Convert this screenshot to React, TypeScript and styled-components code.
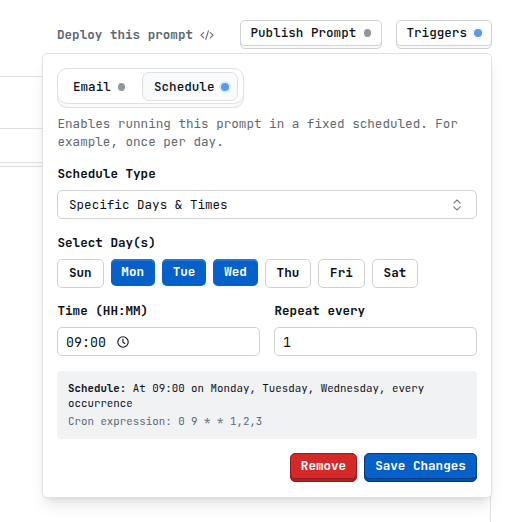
import React from "react";
import styled, { createGlobalStyle, css } from "styled-components";

const ink = "#0c1017";
const muted = "#5d6875";
const line = "#cfd1d3";
const softLine = "#dfe0e2";

const GlobalStyle = createGlobalStyle`
  * { box-sizing: border-box; }
  body { margin: 0; background: #fff; }
  button, input { font: inherit; color: inherit; margin: 0; }
`;

const Page = styled.main`
  position: relative;
  width: 511px;
  height: 522px;
  overflow: hidden;
  background: #fff;
  color: ${ink};
  font-family: "JetBrains Mono", "DejaVu Sans Mono", "Liberation Mono", monospace;
  font-size: 12.6px;
  line-height: 18px;
  white-space: nowrap;
`;

const Header = styled.header`
  display: flex;
  align-items: flex-start;
  justify-content: flex-end;
  height: 76px;
  padding: 20px 19px 0 57px;
`;

const DeployLabel = styled.div`
  display: flex;
  align-items: center;
  gap: 7px;
  height: 30px;
  margin-right: auto;
  color: ${muted};
  font-weight: 600;
  svg { flex: none; }
`;

const HeaderButton = styled.button<{ $width: number }>`
  display: flex;
  align-items: center;
  justify-content: space-between;
  width: ${(p) => p.$width}px;
  height: 29px;
  margin-left: 14px;
  padding: 0 9px 3px 9.5px;
  border: 1px solid ${line};
  border-radius: 5px;
  background: #fff;
  box-shadow: inset 0 -2px 0 #fafafa, inset 0 -3px 0 ${line};
  font-weight: 500;
`;

const Dot = styled.span<{ $on?: boolean; $halo?: string }>`
  flex: none;
  width: ${(p) => (p.$on ? 8 : 7)}px;
  height: 8px;
  margin-right: ${(p) => (p.$on ? 0 : 1)}px;
  border-radius: 50%;
  background: ${(p) => (p.$on ? "#5c9ae2" : "#8e979c")};
  ${(p) => p.$halo && css`box-shadow: 0 0 0 2px ${p.$halo};`}
`;

const Backdrop = styled.section`
  height: 446px;
  margin-right: 20px;
  border-right: 1px solid ${softLine};
`;

const BackRow = styled.div<{ $height: number; $fill?: string }>`
  height: ${(p) => p.$height}px;
  border-top: 1px solid ${softLine};
  background: ${(p) => p.$fill || "#fff"};
`;

const Popover = styled.section`
  position: absolute;
  top: 53px;
  left: 42px;
  width: 450px;
  height: 445px;
  padding: 14px;
  border: 1px solid ${softLine};
  border-radius: 5px;
  background: #fff;
  box-shadow: 0 10px 15px -3px rgba(0, 0, 0, 0.1), 0 4px 6px -4px rgba(0, 0, 0, 0.1);
`;

const Tabs = styled.div`
  display: flex;
  width: 187px;
  height: 40px;
  padding: 3px 5px 6px 4px;
  border: 1px solid ${softLine};
  border-radius: 10px;
  box-shadow: inset 0 -3px 0 #fafafa, inset 0 -4px 0 ${softLine};
`;

const Tab = styled.button<{ $active?: boolean }>`
  display: flex;
  align-items: center;
  justify-content: space-between;
  width: ${(p) => (p.$active ? 96 : 80)}px;
  height: 29px;
  padding: ${(p) => (p.$active ? "0 8px 0 11px" : "0 15px 0 10px")};
  border: 1px solid ${(p) => (p.$active ? "#dcdfe2" : "transparent")};
  border-radius: 7px;
  background: ${(p) => (p.$active ? "#f8fafb" : "transparent")};
  font-weight: 500;
`;

const Description = styled.p`
  margin: 7px 0 0 0.5px;
  color: ${muted};
`;

const Label = styled.div`
  height: 18px;
  padding-left: 0.5px;
  font-weight: 600;
`;

const Field = styled.div<{ $top?: number }>`
  display: flex;
  flex-direction: column;
  gap: 7px;
  margin-top: ${(p) => p.$top ?? 14}px;
`;

const control = css`
  height: 29px;
  border: 1px solid ${line};
  border-radius: 5px;
  background: #fff;
`;

const Select = styled.button`
  ${control}
  display: flex;
  align-items: center;
  justify-content: space-between;
  padding: 0 14px 0 11px;
`;

const Days = styled.div`
  display: flex;
  gap: 7px;
`;

const Day = styled.button<{ $selected: boolean }>`
  ${control}
  width: 46.5px;
  padding: 0 0 1px;
  font-weight: 600;
  ${(p) =>
    p.$selected &&
    css`
      width: 44.4px;
      height: 27px;
      border: 0;
      background: #0560ca;
      box-shadow: inset 0 2px 1px #2a76cd;
      color: #fff;
      font-weight: 700;
    `}
`;

const Columns = styled.div`
  display: grid;
  grid-template-columns: 203px 203px;
  gap: 14px;
`;

const Input = styled.div`
  ${control}
  display: flex;
  align-items: center;
  gap: 11px;
  padding: 0 8px;
  font-size: 13.3px;
`;

const Summary = styled.div`
  height: 68px;
  margin-top: 15px;
  padding: 10px 11px;
  border-radius: 4px;
  background: #f1f2f4;
  font-size: 10.8px;
  line-height: 15px;
  p { margin: 0; }
`;

const Cron = styled.p`
  padding-top: 3px;
  color: ${muted};
`;

const Actions = styled.div`
  display: flex;
  justify-content: flex-end;
  gap: 7px;
  margin-top: 14px;
`;

const Action = styled.button<{ $danger?: boolean }>`
  width: ${(p) => (p.$danger ? 67 : 113)}px;
  height: 29px;
  padding: 0 0 3px;
  border: 1px solid ${(p) => (p.$danger ? "#8c1c20" : "#063c7d")};
  border-radius: 5px;
  background: ${(p) => (p.$danger ? "#d52929" : "#0560ca")};
  box-shadow: ${(p) =>
    p.$danger
      ? "inset 0 -2px 0 #b51f24, inset 0 -3px 0 #8c1c20"
      : "inset 0 -2px 0 #0650a7, inset 0 -3px 0 #063c7d"};
  color: #fff;
  font-weight: 700;
`;

const CodeIcon = () => (
  <svg width="14" height="12" viewBox="0 0 14 12" fill="none" stroke={muted} strokeWidth="1.1" strokeLinecap="round" strokeLinejoin="round">
    <path d="M3.7 3.6.9 6.2 3.7 8.8M10.3 3.6l2.8 2.6-2.8 2.6M8.4 1.8 5.8 10.4" />
  </svg>
);

const ChevronsIcon = () => (
  <svg width="10" height="12" viewBox="0 0 10 12" fill="none" stroke="#777b80" strokeWidth="1.1" strokeLinecap="round" strokeLinejoin="round">
    <path d="M1.8 4.2 5 1l3.2 3.2M1.8 7.8 5 11l3.2-3.2" />
  </svg>
);

const ClockIcon = () => (
  <svg width="12" height="12" viewBox="0 0 12 12" fill="none" stroke={ink} strokeWidth="1.1">
    <circle cx="6" cy="6" r="5.2" />
    <path d="M5.9 2.8v3.5l2.3 1.4" />
  </svg>
);

const days = ["Sun", "Mon", "Tue", "Wed", "Thu", "Fri", "Sat"];
const selectedDays = ["Mon", "Tue", "Wed"];

export default function App() {
  return (
    <Page>
      <GlobalStyle />
      <Header>
        <DeployLabel>
          Deploy this prompt <CodeIcon />
        </DeployLabel>
        <HeaderButton $width={142}>
          Publish Prompt <Dot />
        </HeaderButton>
        <HeaderButton $width={96}>
          Triggers <Dot $on $halo="#f5f9fe" />
        </HeaderButton>
      </Header>
      <Backdrop>
        <BackRow $height={52} />
        <BackRow $height={34} />
        <BackRow $height={4} $fill="#fafafa" />
        <BackRow $height={20} />
      </Backdrop>
      <Popover>
        <Tabs>
          <Tab>
            Email <Dot />
          </Tab>
          <Tab $active>
            Schedule <Dot $on $halo="#dcebfa" />
          </Tab>
        </Tabs>
        <Description>
          Enables running this prompt in a fixed scheduled. For
          <br />
          example, once per day.
        </Description>
        <Field>
          <Label>Schedule Type</Label>
          <Select>
            Specific Days &amp; Times <ChevronsIcon />
          </Select>
        </Field>
        <Field $top={15}>
          <Label>Select Day(s)</Label>
          <Days>
            {days.map((day) => (
              <Day key={day} $selected={selectedDays.includes(day)}>
                {day}
              </Day>
            ))}
          </Days>
        </Field>
        <Columns>
          <Field>
            <Label>Time (HH:MM)</Label>
            <Input>
              09:00 <ClockIcon />
            </Input>
          </Field>
          <Field>
            <Label>Repeat every</Label>
            <Input>1</Input>
          </Field>
        </Columns>
        <Summary>
          <p>
            <b>Schedule:</b> At 09:00 on Monday, Tuesday, Wednesday, every
            <br />
            occurrence
          </p>
          <Cron>Cron expression: 0 9 * * 1,2,3</Cron>
        </Summary>
        <Actions>
          <Action $danger>Remove</Action>
          <Action>Save Changes</Action>
        </Actions>
      </Popover>
    </Page>
  );
}
